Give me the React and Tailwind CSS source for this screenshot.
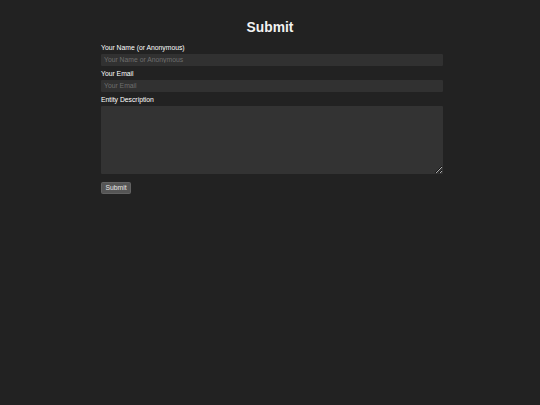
export default function App() {
  return (
    <div
      className="min-h-[405px] w-full bg-[#222222] text-white"
      style={{ fontFamily: '"Liberation Sans", Arial, sans-serif' }}
    >
      <h1 className="pt-[20px] text-center text-[13.8px] font-bold leading-[16px] text-[#f2f2f2]">
        Submit
      </h1>
      <form className="ml-[101px] mt-[7px] flex w-[342px] flex-col">
        <label className="mb-[1px] block text-[6.8px] leading-[10px] text-white">
          Your Name (or Anonymous)
        </label>
        <input
          type="text"
          placeholder="Your Name or Anonymous"
          className="h-[12px] w-full rounded-[1px] border-0 bg-[#313131] px-[3px] text-[6.8px] leading-[12px] text-white outline-none placeholder:text-[#6e6e6e]"
        />
        <label className="mb-[1.5px] mt-[2.5px] block text-[6.8px] leading-[10px] text-white">
          Your Email
        </label>
        <input
          type="email"
          placeholder="Your Email"
          className="h-[12px] w-full rounded-[1px] border-0 bg-[#313131] px-[3px] text-[6.8px] leading-[12px] text-white outline-none placeholder:text-[#6e6e6e]"
        />
        <label className="mb-[1px] mt-[2.5px] block text-[6.8px] leading-[10px] text-white">
          Entity Description
        </label>
        <textarea className="block h-[68px] w-full resize-y rounded-[1px] border-0 bg-[#333333] p-[3px] text-[6.8px] text-white outline-none" />
        <div className="mt-[8px] flex">
          <button
            type="button"
            className="h-[12px] w-[30px] rounded-[1.5px] border border-[#626262] bg-[#555555] p-0 text-[6.8px] leading-[10px] text-[#e6e6e6]"
          >
            Submit
          </button>
        </div>
      </form>
    </div>
  );
}
